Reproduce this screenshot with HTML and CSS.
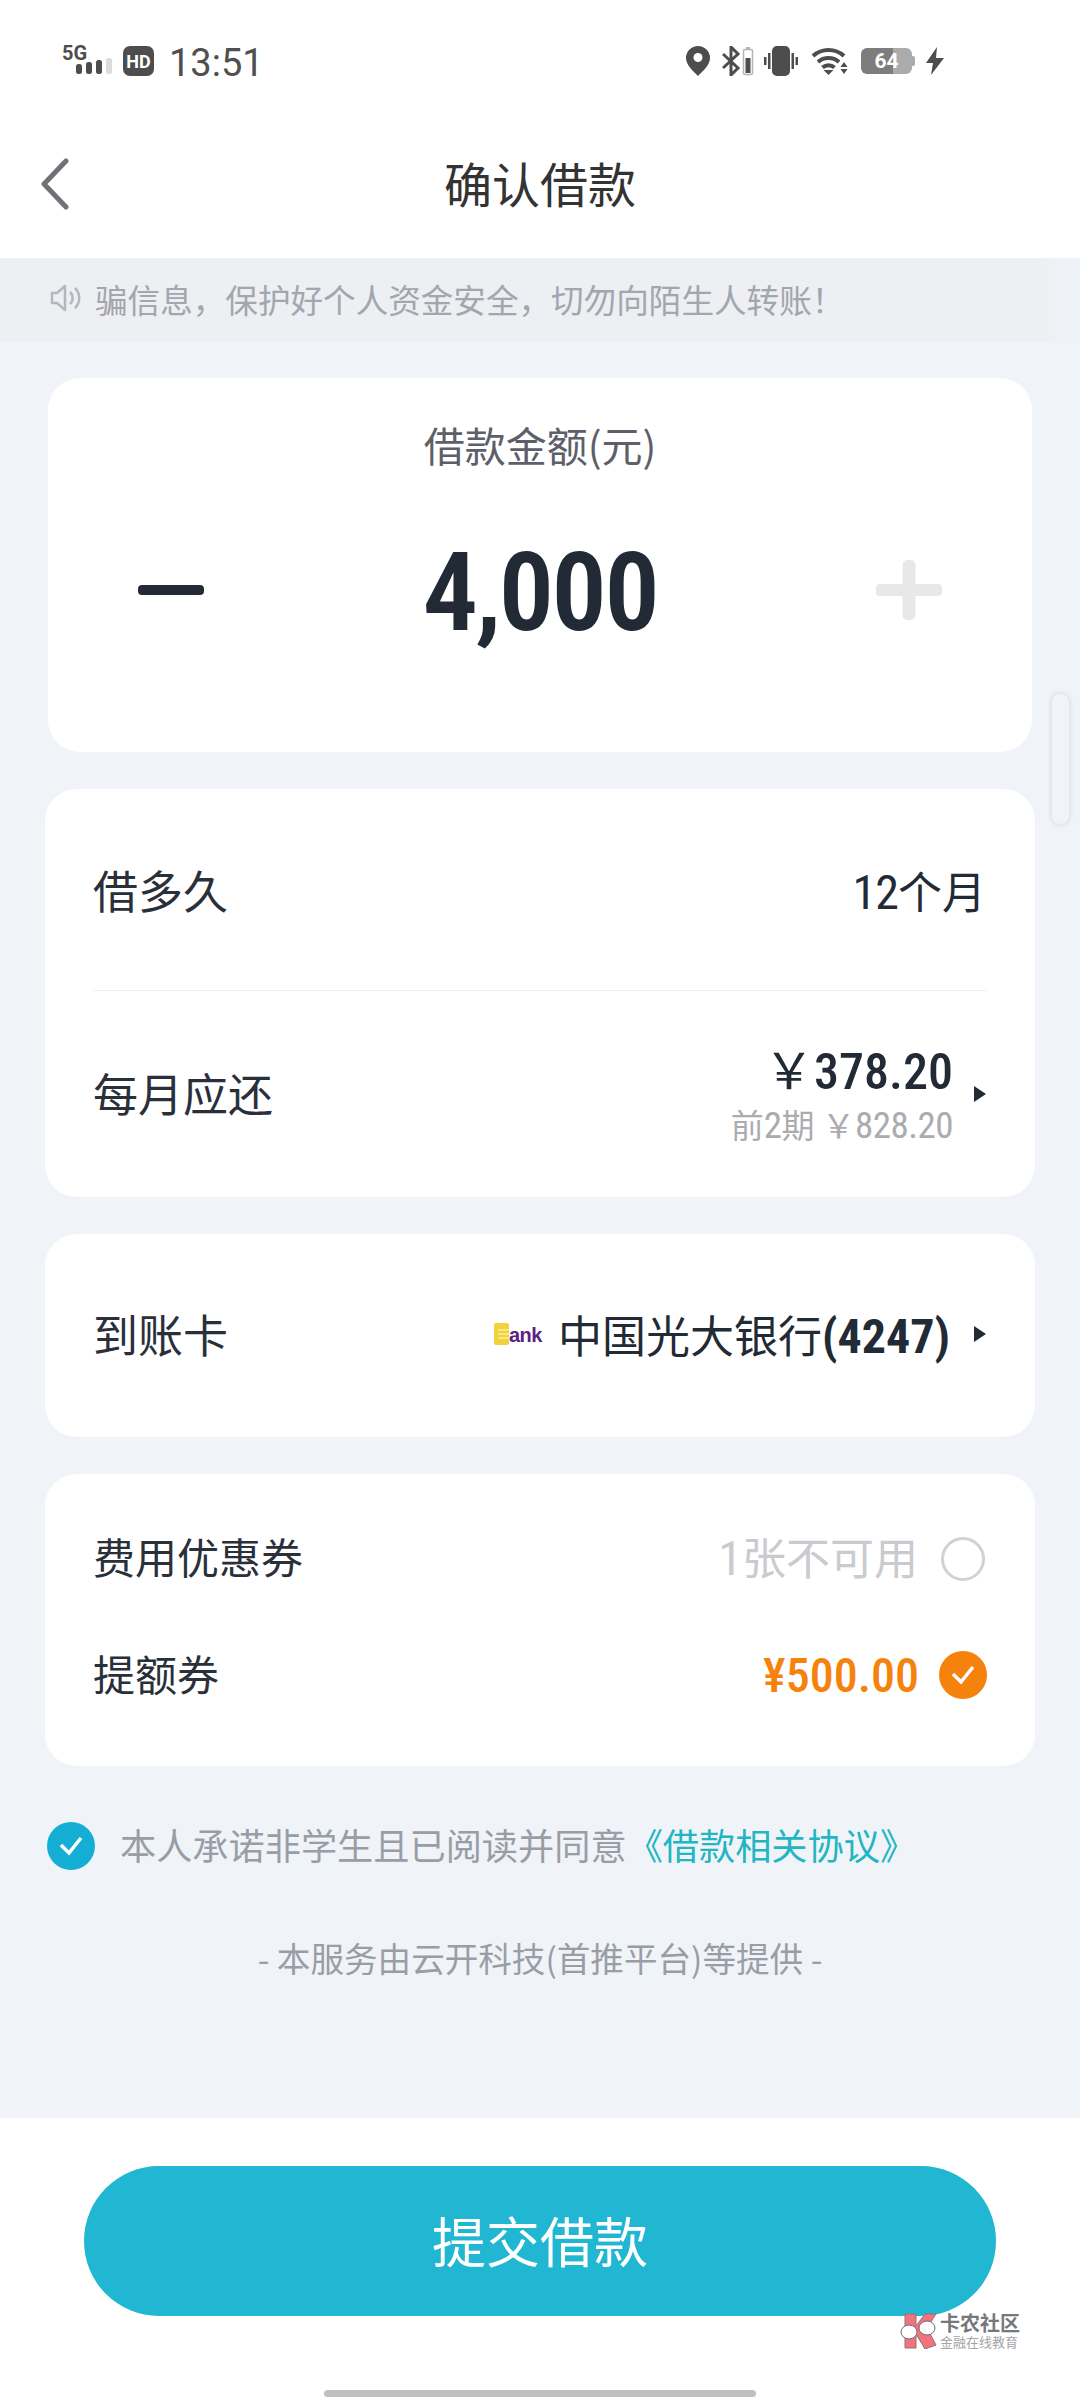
FILE: index.html
```html
<!DOCTYPE html>
<html lang="zh-CN">
<head>
    <meta charset="UTF-8">
    <meta name="viewport" content="width=device-width, initial-scale=1.0">
    <title>确认借款</title>
    <link rel="stylesheet" href="styles.css">
</head>
<body>

    <div class="status">
        <div class="status-left">
            <svg class="signal" width="52" height="32" viewBox="0 0 52 32">
                <rect x="14" y="19" width="6" height="10" rx="2.500" fill="#4d4d4d"/>
                <rect x="24" y="17" width="6" height="12" rx="2.500" fill="#4d4d4d"/>
                <rect x="34" y="15" width="6" height="14" rx="2.500" fill="#4d4d4d"/>
                <rect x="44" y="13" width="6" height="16" rx="2.500" fill="#dcdcdc"/>
            </svg>
            <span class="five-g">5G</span>
            <span class="hd">HD</span>
            <span class="clock">13:51</span>
        </div>
        <div class="status-right">
            <svg width="24" height="30" viewBox="0 0 24 30"><path d="M12 0a12 12 0 0 1 12 12c0 7-7 13-12 18C7 25 0 19 0 12A12 12 0 0 1 12 0z" fill="#4d4d4d"/><circle cx="12" cy="11.500" r="4.500" fill="#fff"/></svg>
            <svg class="gap-bt" width="32" height="30" viewBox="0 0 32 30">
                <path d="M1 8l15 14-7 7V1l7 7L1 22" fill="none" stroke="#4d4d4d" stroke-width="3"/>
                <rect x="21.500" y="3.500" width="9" height="25" rx="1.500" fill="#fff" stroke="#b5b5b5" stroke-width="1.500"/>
                <rect x="24" y="1" width="4" height="2" fill="#b5b5b5"/>
                <rect x="23.500" y="12" width="5" height="15" fill="#4d4d4d"/>
            </svg>
            <svg class="gap-vib" width="34" height="30" viewBox="0 0 34 30">
                <rect x="8" y="0" width="18" height="30" rx="5" fill="#4d4d4d"/>
                <rect x="0" y="11" width="2.500" height="8" fill="#4d4d4d"/>
                <rect x="4" y="7" width="2.500" height="16" fill="#4d4d4d"/>
                <rect x="27.500" y="7" width="2.500" height="16" fill="#4d4d4d"/>
                <rect x="31.500" y="11" width="2.500" height="8" fill="#4d4d4d"/>
            </svg>
            <svg class="gap-wifi" width="37" height="28" viewBox="0 0 37 28">
                <path d="M2 9a23 23 0 0 1 31 0M7 15a16 16 0 0 1 21 0M11.500 20.500a9 9 0 0 1 12 0" fill="none" stroke="#4d4d4d" stroke-width="4"/>
                <path d="M17.500 28l-5-5h10z" fill="#4d4d4d"/>
                <path d="M33 15l3.500 5h-7zM33 27l-3.500-5h7z" fill="#4d4d4d"/>
            </svg>
            <div class="battery"><span class="battery-level">64</span></div>
            <svg class="gap-bolt" width="18" height="28" viewBox="0 0 18 28"><path d="M11 0L0 16h7l-2 12 13-17h-8z" fill="#4d4d4d"/></svg>
        </div>
    </div>

    <div class="nav">
        <svg class="back" width="30" height="52" viewBox="0 0 30 52"><path d="M26 3L4 26l22 23" fill="none" stroke="#6f7277" stroke-width="5" stroke-linecap="round" stroke-linejoin="round"/></svg>
        <h1 class="title">确认借款</h1>
    </div>

    <div class="notice">
        <svg width="32" height="28" viewBox="0 0 32 28"><path d="M2 9h5l8-7v24l-8-7H2z" fill="none" stroke="#b4b7bd" stroke-width="2.500" stroke-linejoin="round"/><path d="M20 8a8 8 0 0 1 0 12M25 4a14 14 0 0 1 0 20" fill="none" stroke="#b4b7bd" stroke-width="2.500"/></svg>
        <span>骗信息，保护好个人资金安全，切勿向陌生人转账！</span>
    </div>

    <div class="main">
        <div class="card amount">
            <div class="amount-label">借款金额(元)</div>
            <div class="stepper">
                <svg width="66" height="60" viewBox="0 0 66 60"><rect x="0" y="25" width="66" height="10" rx="4" fill="#222a35"/></svg>
                <div class="amount-value">4,000</div>
                <svg width="66" height="60" viewBox="0 0 66 60"><rect x="0" y="24" width="66" height="12" rx="4" fill="#e8e8e8"/><rect x="26.500" y="0" width="13" height="60" rx="5" fill="#e8e8e8"/></svg>
            </div>
        </div>

        <div class="card term">
            <div class="row row-term">
                <span class="label">借多久</span>
                <span class="term-value"><span class="num">12</span>个月</span>
            </div>
            <div class="row row-pay">
                <span class="label">每月应还</span>
                <div class="pay-right">
                    <div class="pay-amounts">
                        <div class="pay-main"><span class="yen">￥</span><span class="num">378.20</span></div>
                        <div class="pay-sub">前<span class="num">2</span>期 <span class="yen">￥</span><span class="num">828.20</span></div>
                    </div>
                    <span class="arrow"></span>
                </div>
            </div>
        </div>

        <div class="card bank">
            <div class="row row-bank">
                <span class="label">到账卡</span>
                <div class="bank-right">
                    <div class="bank-logo">
                        <svg width="15" height="22" viewBox="0 0 15 22">
                            <rect width="15" height="22" rx="2" fill="#f0d23c"/>
                            <path d="M4 7h11M4 11h11M4 15h11" stroke="#fbeea0" stroke-width="1.500"/>
                        </svg>
                        <span class="bank-logo-text">ank</span>
                    </div>
                    <span class="bank-name">中国光大银行<span class="num bold">(4247)</span></span>
                    <span class="arrow arrow-small"></span>
                </div>
            </div>
        </div>

        <div class="card coupons">
            <div class="row row-coupon">
                <span class="label label-small">费用优惠券</span>
                <div class="coupon-right">
                    <span class="coupon-off"><span class="num">1</span>张不可用</span>
                    <span class="radio"></span>
                </div>
            </div>
            <div class="row row-coupon">
                <span class="label label-small">提额券</span>
                <div class="coupon-right">
                    <span class="coupon-on num">¥500.00</span>
                    <span class="tick tick-orange">
                        <svg width="26" height="22" viewBox="0 0 26 22"><path d="M3 10l8 8L23 3" fill="none" stroke="#fff" stroke-width="3.500"/></svg>
                    </span>
                </div>
            </div>
        </div>

        <div class="agree">
            <span class="tick tick-blue">
                <svg width="26" height="22" viewBox="0 0 26 22"><path d="M3 10l8 8L23 3" fill="none" stroke="#fff" stroke-width="3.500"/></svg>
            </span>
            <span class="agree-text">本人承诺非学生且已阅读并同意<a class="agree-link">《借款相关协议》</a></span>
        </div>

        <div class="provider">- 本服务由云开科技(首推平台)等提供 -</div>
    </div>

    <div class="footer">
        <button class="submit">提交借款</button>
        <div class="home-bar"></div>
    </div>

    <!-- scroll thumb sits on top of the cards -->
    <div class="scroll-thumb"></div>

    <!-- forum stamp over the bottom of the button -->
    <div class="stamp">
        <svg width="38" height="36" viewBox="0 0 38 36">
            <path d="M5 1h11v12L25 1h11l-9 14 9 17-11 4-9-15v14H5z" fill="#f2737d" stroke="#8b7479" stroke-width="1"/>
            <ellipse cx="9" cy="19" rx="8" ry="7" fill="#fff" stroke="#77686b" stroke-width="1"/>
            <ellipse cx="27" cy="15" rx="8" ry="7" fill="#fff" stroke="#77686b" stroke-width="1"/>
        </svg>
        <div class="stamp-text">
            <div class="stamp-name">卡农社区</div>
            <div class="stamp-sub">金融在线教育</div>
        </div>
    </div>

</body>
</html>
```

FILE: styles.css
```css
* {
    box-sizing: border-box;
}
body {
    position: relative;
    display: flex;
    flex-direction: column;
    width: 1080px;
    height: 2400px;
    margin: 0;
    overflow: hidden;
    font-family: "Noto Sans CJK SC", Roboto, sans-serif;
    background-color: #f0f4f9;
    color: #2a303a;
}
.num {
    font-family: Roboto, "Noto Sans CJK SC", sans-serif;
    font-stretch: 75%;
}
.bold {
    font-weight: 700;
}

/* status bar */
.status {
    display: flex;
    justify-content: space-between;
    align-items: center;
    height: 122px;
    margin-bottom: -12px;
    padding: 0 136px 0 62px;
    background: #fff;
}
.status-left, .status-right {
    display: flex;
    align-items: center;
}
.status-left {
    position: relative;
}
.five-g {
    position: absolute;
    left: 0;
    top: 4px;
    font: 700 20px Roboto, sans-serif;
    color: #4d4d4d;
}
.signal {
    margin-right: 9px;
}
.hd {
    display: flex;
    align-items: center;
    justify-content: center;
    width: 31px;
    height: 30px;
    margin-right: 15px;
    border-radius: 7px;
    font: 700 18px Roboto, sans-serif;
    color: #fff;
    background: #4d4d4d;
}
.clock {
    margin-top: 4px;
    font: 400 38px Roboto, sans-serif;
    color: #4f4f4f;
}
.gap-bt {
    margin-left: 12px;
}
.gap-vib {
    margin-left: 10px;
}
.gap-wifi {
    margin-left: 13px;
}
.gap-bolt {
    margin-left: 14px;
}
.battery {
    position: relative;
    width: 51px;
    height: 26px;
    margin-left: 13px;
    border-radius: 6px;
    background: linear-gradient(to right, #7d7d7d 63%, #ababab 63%);
}
.battery::after {
    content: "";
    position: absolute;
    right: -3px;
    top: 8px;
    width: 3px;
    height: 10px;
    border-radius: 0 2px 2px 0;
    background: #ababab;
}
.battery-level {
    display: block;
    font: 700 21px/26px Roboto, sans-serif;
    text-align: center;
    color: #fff;
}

/* title bar */
.nav {
    position: relative;
    display: flex;
    align-items: center;
    justify-content: center;
    height: 148px;
    padding-bottom: 4px;
    background: #fff;
}
.back {
    position: absolute;
    left: 40px;
    top: 48px;
}
.title {
    margin: 0;
    font-size: 48px;
    font-weight: 400;
    color: #333;
}

.notice {
    display: flex;
    align-items: center;
    gap: 13px;
    height: 84px;
    padding: 0 0 4px 50px;
    font-size: 32.600px;
    color: #a3a6ae;
    background: linear-gradient(to right, #edeff2 96%, #f0f4f9);
}

.main {
    display: flex;
    flex-direction: column;
    flex: 1;
    gap: 37px;
    padding: 36px 45px 0;
}
.card {
    border-radius: 32px;
    background: #fff;
}
.row {
    display: flex;
    justify-content: space-between;
    align-items: center;
    padding: 0 49px 0 48px;
}
.label {
    font-size: 45px;
}
.label-small {
    font-size: 42px;
}

/* amount picker */
.amount {
    height: 374px;
    margin: 0 3px;
    padding-top: 42px;
}
.amount-label {
    font-size: 41px;
    line-height: 48px;
    text-align: center;
    color: #5d6068;
}
.stepper {
    display: flex;
    justify-content: space-between;
    align-items: center;
    height: 140px;
    margin-top: 52px;
    padding: 0 90px;
}
.amount-value {
    margin-top: 6px;
    font: 600 110px/140px Roboto, sans-serif;
    font-stretch: 75%;
    letter-spacing: -2.500px;
    color: #222a35;
}

/* term and repayment */
.term {
    height: 408px;
}
.row-term {
    height: 202px;
    margin: 0 49px 0 48px;
    padding: 0;
    border-bottom: 1px solid #eceef1;
}
.term-value {
    font-size: 44px;
    color: #222a35;
}
.term-value .num {
    font-size: 48px;
    letter-spacing: -1px;
}
.row-pay {
    height: 205px;
}
.row-pay .label {
    margin-bottom: 3px;
}
.pay-right {
    display: flex;
    align-items: center;
    gap: 21px;
}
.pay-amounts {
    text-align: right;
}
.pay-main {
    font-size: 50px;
    line-height: 58px;
    color: #222a35;
}
.pay-main .num {
    font-weight: 500;
}
.pay-sub {
    font-size: 33px;
    line-height: 46px;
    color: #aaacb0;
}
.pay-sub .num {
    font-size: 37px;
    letter-spacing: -0.500px;
}
.yen {
    font-family: "Noto Sans CJK SC", sans-serif;
}
.arrow {
    width: 0;
    height: 0;
    border-left: 12px solid #222a35;
    border-top: 8px solid transparent;
    border-bottom: 8px solid transparent;
}

/* receiving card */
.bank {
    height: 203px;
}
.row-bank {
    height: 100%;
    padding-bottom: 4px;
}
.bank-right {
    display: flex;
    align-items: center;
}
.bank-logo {
    display: flex;
    align-items: flex-end;
    margin-right: 16px;
}
.bank-logo-text {
    font: 700 20px/19px "Liberation Sans", sans-serif;
    letter-spacing: -0.5px;
    color: #5c2180;
}
.bank-name {
    font-size: 44px;
    color: #222a35;
}
.bank-name .num {
    font-size: 48px;
}
.arrow-small {
    margin-left: 24px;
}

/* coupons */
.coupons {
    height: 292px;
    padding-top: 23px;
}
.row-coupon {
    height: 117px;
    padding-right: 48px;
}
.coupon-right {
    display: flex;
    align-items: center;
    gap: 20px;
}
.coupon-off {
    font-size: 44px;
    color: #c9cbcf;
}
.coupon-off .num {
    font-size: 48px;
}
.radio {
    width: 44px;
    height: 44px;
    margin: 6px 2px 0 3px;
    border: 3px solid #d0d2d6;
    border-radius: 50%;
}
.coupon-on {
    margin-top: 5px;
    font-size: 48px;
    font-weight: 500;
    color: #f5820d;
}
.tick {
    display: flex;
    align-items: center;
    justify-content: center;
    flex-shrink: 0;
    width: 48px;
    height: 48px;
    border-radius: 50%;
}
.tick-orange {
    margin-top: 5px;
    background: #f5820d;
}
.tick-blue {
    margin-top: 4px;
    background: #14aed5;
}

/* agreement */
.agree {
    display: flex;
    align-items: center;
    gap: 25px;
    margin: 15px 0 0 2px;
}
.agree-text {
    font-size: 36.200px;
    color: #9a9da6;
}
.agree-link {
    color: #22b5c2;
}
.provider {
    margin-top: 27px;
    font-size: 33.600px;
    line-height: 48px;
    text-align: center;
    color: #9a9da6;
}

/* bottom button */
.footer {
    height: 282px;
    padding: 48px 84px 0;
    background: #fff;
}
.submit {
    display: block;
    width: 100%;
    height: 150px;
    padding: 0 0 4px;
    border: none;
    border-radius: 75px;
    font-family: "Noto Sans CJK SC", sans-serif;
    font-size: 54px;
    color: #fff;
    background: #21b6d1;
}
.home-bar {
    width: 432px;
    height: 7px;
    margin: 74px auto 0;
    border-radius: 4px;
    background: #c0c0c0;
}

.scroll-thumb {
    position: absolute;
    left: 1050px;
    top: 692px;
    width: 21px;
    height: 134px;
    border: 2px solid #e3e7f0;
    border-radius: 10px;
    box-shadow: 0 0 0 2px #eceff6;
}

.stamp {
    position: absolute;
    left: 900px;
    top: 2312px;
    display: flex;
    align-items: center;
    gap: 2px;
}
.stamp-name {
    font-size: 20px;
    font-weight: 700;
    line-height: 22px;
    color: #77787b;
}
.stamp-sub {
    font-size: 13px;
    line-height: 15px;
    color: #a4a5a8;
}
```
